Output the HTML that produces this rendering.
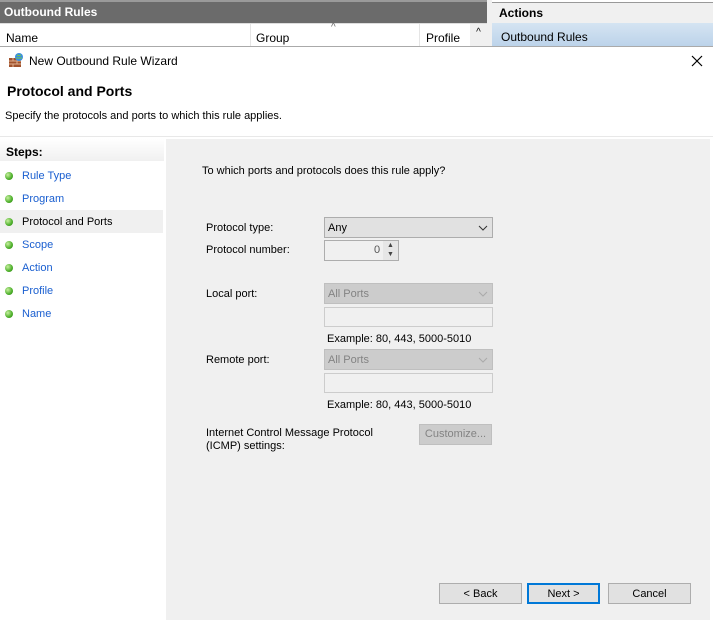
<!DOCTYPE html><html><head><style>
*{margin:0;padding:0;box-sizing:border-box}
body{width:713px;height:620px;position:relative;overflow:hidden;font-family:"Liberation Sans",sans-serif;font-size:11px;color:#000;background:#fff}
.a{position:absolute;white-space:nowrap}
.sel{position:absolute;border:1px solid #adadad;background:#e1e1e1;height:21px;padding:4px 3px}
.dis{background:#ccc;border-color:#bfbfbf;color:#838383}
.tb{position:absolute;border:1px solid #ccc;background:#f0f0f0;height:20px}
.btn{position:absolute;border:1px solid #adadad;background:#e1e1e1;height:21px;text-align:center;line-height:21px}
.chev{position:absolute;right:4px;top:7px}
.dot{position:absolute;left:5px;width:8px;height:8px;border-radius:50%;background:radial-gradient(circle at 35% 35%,#c8f0a0,#4caf2a 60%,#2d7d14)}
.st{position:absolute;left:22px;color:#1a5fd0}
</style></head><body>
<div class="a" style="left:0;top:0;width:487px;height:23px;background:#6b6b6b;border-top:2px solid #9a9a9a"></div>
<div class="a" style="left:4px;top:5px;color:#fff;font-weight:bold;font-size:12px">Outbound Rules</div>
<div class="a" style="left:0;top:23px;width:487px;height:23px;background:#fff;border-top:1px solid #ddd"></div>
<div class="a" style="left:6px;top:31px;font-size:12px">Name</div>
<div class="a" style="left:250px;top:24px;width:1px;height:22px;background:#e5e5e5"></div>
<div class="a" style="left:256px;top:31px;font-size:12px">Group</div>
<div class="a" style="left:331px;top:22px;font-size:10px;color:#666">^</div>
<div class="a" style="left:419px;top:24px;width:1px;height:22px;background:#e5e5e5"></div>
<div class="a" style="left:426px;top:31px;font-size:12px">Profile</div>
<div class="a" style="left:470px;top:24px;width:17px;height:22px;background:#f0f0f0;font-size:10px;text-align:center;line-height:18px">^</div>
<div class="a" style="left:487px;top:0;width:5px;height:46px;background:#f0f0f0"></div>
<div class="a" style="left:492px;top:2px;width:221px;height:21px;background:#f0f0f0;border-top:1px solid #999"></div>
<div class="a" style="left:499px;top:6px;font-weight:bold;font-size:12px">Actions</div>
<div class="a" style="left:492px;top:23px;width:221px;height:23px;background:linear-gradient(#d5e4f2,#bcd3ea)"></div>
<div class="a" style="left:501px;top:30px;font-size:12px">Outbound Rules</div>
<div class="a" style="left:0;top:46px;width:713px;height:574px;background:#fff;border-top:1px solid #aaa"></div>
<svg class="a" style="left:8px;top:52px" width="16" height="16"><rect x="1" y="6" width="12" height="9" fill="#a0522d"/><path d="M1 9h12M1 12h12M5 6v3M9 9v3M5 12v3" stroke="#e0b090"/><circle cx="11" cy="5" r="4" fill="#3a8ee0"/><path d="M9 3q2 1 4 0M8 6h6" stroke="#7c4" /></svg>
<div class="a" style="left:29px;top:54px;font-size:12px">New Outbound Rule Wizard</div>
<svg class="a" style="left:691px;top:55px" width="12" height="12"><path d="M1 1L11 11M11 1L1 11" stroke="#000" stroke-width="1.2"/></svg>
<div class="a" style="left:7px;top:83px;font-size:14px;font-weight:bold">Protocol and Ports</div>
<div class="a" style="left:5px;top:110px;font-size:11px">Specify the protocols and ports to which this rule applies.</div>
<div class="a" style="left:0;top:136px;width:713px;height:1px;background:#e8e8e8"></div>
<div class="a" style="left:0;top:139px;width:164px;height:22px;background:linear-gradient(#fff,#f0f0f0)"></div>
<div class="a" style="left:6px;top:145px;font-weight:bold;font-size:12px">Steps:</div>
<div class="a" style="left:0;top:210px;width:163px;height:23px;background:#f0f0f0"></div>
<div class="dot" style="top:172px"></div><div class="st" style="top:170px">Rule Type</div>
<div class="dot" style="top:195px"></div><div class="st" style="top:193px">Program</div>
<div class="dot" style="top:218px"></div><div class="st" style="top:216px;color:#000">Protocol and Ports</div>
<div class="dot" style="top:241px"></div><div class="st" style="top:239px">Scope</div>
<div class="dot" style="top:264px"></div><div class="st" style="top:262px">Action</div>
<div class="dot" style="top:287px"></div><div class="st" style="top:285px">Profile</div>
<div class="dot" style="top:310px"></div><div class="st" style="top:308px">Name</div>
<div class="a" style="left:166px;top:139px;width:544px;height:481px;background:#f0f0f0"></div>
<div class="a" style="left:710px;top:137px;width:3px;height:483px;background:#fff"></div>
<div class="a" style="left:202px;top:165px">To which ports and protocols does this rule apply?</div>
<div class="a" style="left:206px;top:222px">Protocol type:</div>
<div class="sel" style="left:324px;top:217px;width:169px">Any<svg class="chev" width="10" height="6"><path d="M1 1l4 4 4-4" fill="none" stroke="#333"/></svg></div>
<div class="a" style="left:206px;top:244px">Protocol number:</div>
<div class="a" style="left:324px;top:240px;width:75px;height:21px;border:1px solid #adadad;background:#f0f0f0"></div>
<div class="a" style="left:374px;top:244px;color:#555">0</div>
<div class="a" style="left:383px;top:241px;width:15px;height:19px;background:#e6e6e6;font-size:7px;text-align:center;line-height:9px;color:#444">▲<br>▼</div>
<div class="a" style="left:206px;top:288px">Local port:</div>
<div class="sel dis" style="left:324px;top:283px;width:169px">All Ports<svg class="chev" width="10" height="6"><path d="M1 1l4 4 4-4" fill="none" stroke="#aaa"/></svg></div>
<div class="tb" style="left:324px;top:307px;width:169px"></div>
<div class="a" style="left:327px;top:333px">Example: 80, 443, 5000-5010</div>
<div class="a" style="left:206px;top:354px">Remote port:</div>
<div class="sel dis" style="left:324px;top:349px;width:169px">All Ports<svg class="chev" width="10" height="6"><path d="M1 1l4 4 4-4" fill="none" stroke="#aaa"/></svg></div>
<div class="tb" style="left:324px;top:373px;width:169px"></div>
<div class="a" style="left:327px;top:399px">Example: 80, 443, 5000-5010</div>
<div class="a" style="left:206px;top:427px;line-height:13px">Internet Control Message Protocol<br>(ICMP) settings:</div>
<div class="btn" style="left:419px;top:424px;width:73px;background:#ccc;border-color:#bfbfbf;color:#838383;line-height:19px">Customize...</div>
<div class="btn" style="left:439px;top:583px;width:83px">&lt; Back</div>
<div class="btn" style="left:527px;top:583px;width:73px;border:2px solid #0078d7;line-height:19px">Next &gt;</div>
<div class="btn" style="left:608px;top:583px;width:83px">Cancel</div>
</body></html>
